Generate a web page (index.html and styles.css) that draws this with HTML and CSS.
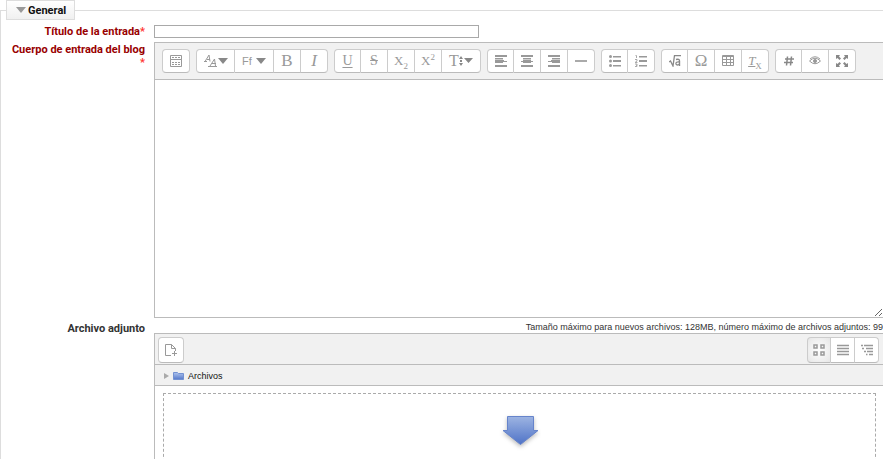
FILE: index.html
```
<!DOCTYPE html>
<html lang="es">
<head>
<meta charset="utf-8">
<title>Entrada del blog</title>
<link rel="stylesheet" href="styles.css">
</head>
<body>
<form>
<fieldset class="section">
  <legend class="section-title"><svg width="10" height="6" viewBox="0 0 10 6"><path d="M0 0h10L5 6z" fill="#999"/></svg>General</legend>

  <div class="row row-title">
    <label class="label required" for="titulo">Título de la entrada<span class="star">*</span></label>
    <input class="title-input" id="titulo" type="text">
  </div>

  <div class="row row-body">
    <label class="label required" for="cuerpo">Cuerpo de entrada del blog <span class="star star-below">*</span></label>
    <div class="editor">
      <div class="toolbar">
        <div class="group">
          <button type="button" aria-label="Mostrar más botones"><svg width="14" height="14" viewBox="0 0 14 14" fill="none" stroke="#999"><path d="M1.500 1.500h11v4h-11zM1.500 5.500h11v7h-11z"/><path d="M3 3.500h9M3 8.500h9M3 10.500h9" stroke-dasharray="2 1"/></svg></button>
        </div>
        <div class="group">
          <button type="button" class="wide" aria-label="Estilos"><svg width="24" height="14" viewBox="0 0 24 14"><g fill="none" stroke="#999"><path d="M1 7.500L5 1l1 6.500M3 5.500h3M0 7.500h3M6 12l4.500-7 1 7M8 9.500h4M4 12.500h9"/></g><path d="M14 4h10l-5 6z" fill="#888"/></svg></button>
          <button type="button" class="wide font" aria-label="Tipo de letra"><span>Ff</span><svg width="10" height="6" viewBox="0 0 10 6"><path d="M0 0h10L5 6z" fill="#888"/></svg></button>
          <button type="button" class="serif">B</button>
          <button type="button" class="serif italic">I</button>
        </div>
        <div class="group">
          <button type="button" class="letter under">U</button>
          <button type="button" class="letter strike">S</button>
          <button type="button" class="letter script"><span>X<sub>2</sub></span></button>
          <button type="button" class="letter script"><span>X<sup>2</sup></span></button>
          <button type="button" class="wide letter size"><span>T</span><svg width="14" height="12" viewBox="0 0 14 12"><path d="M0 4l2-3 2 3zM0 8l2 3 2-3zM1 5h2v2H1zM5 3h9l-4.500 5z" fill="#888"/></svg></button>
        </div>
        <div class="group">
          <button type="button" aria-label="Alinear a la izquierda"><svg width="12" height="12" viewBox="0 0 12 12"><path d="M0 0h12v2H0zM0 3h8v1.500H0zM0 5h9v1H0zM0 6h12v1H0zM0 7h8v1H0zM0 10h12v2H0z" fill="#999"/></svg></button>
          <button type="button" aria-label="Centrar"><svg width="12" height="12" viewBox="0 0 12 12"><path d="M0 0h12v2H0zM2 3h8v1.500H2zM2 5h8v1H2zM0 6h12v1H0zM2 7h8v1H2zM0 10h12v2H0z" fill="#999"/></svg></button>
          <button type="button" aria-label="Alinear a la derecha"><svg width="12" height="12" viewBox="0 0 12 12"><path d="M0 0h12v2H0zM4 3h8v1.500H4zM3 5h9v1H3zM0 6h12v1H0zM4 7h8v1H4zM0 10h12v2H0z" fill="#999"/></svg></button>
          <button type="button" aria-label="Línea horizontal"><svg width="12" height="12" viewBox="0 0 12 12"><path d="M0 5h12v2H0z" fill="#aaa"/></svg></button>
        </div>
        <div class="group">
          <button type="button" aria-label="Lista"><svg width="12" height="12" viewBox="0 0 12 12" fill="#999"><circle cx="1.500" cy="1.500" r="1.500"/><circle cx="1.500" cy="6" r="1.500"/><circle cx="1.500" cy="10.500" r="1.500"/><path d="M4 1h8v1.500H4zM4 5h8v2H4zM4 10h8v1.500H4z"/></svg></button>
          <button type="button" aria-label="Lista numerada"><svg width="12" height="12" viewBox="0 0 12 12" fill="#999"><path d="M4 1h8v1.500H4zM4 5h8v2H4zM4 10h8v1.500H4z"/><path d="M0.500 0.500h1v2.500M0 4.500h2v1.500l-2 1.500h2.500M0 9h2v1.300H1h1v1.200H0" fill="none" stroke="#aaa"/></svg></button>
        </div>
        <div class="group">
          <button type="button" aria-label="Ecuación"><svg width="12" height="12" viewBox="0 0 12 12" fill="none" stroke="#888"><path d="M0 7l1.500-1L4 11 5.500 .5H12" stroke-width="1.300"/><path d="M7 4.500q3.500-1 3.500 1.500v5M10.500 7q-4-.5-3.500 2 1 2 3.500 0" stroke-width="1.400"/></svg></button>
          <button type="button" class="serif">Ω</button>
          <button type="button" aria-label="Tabla"><svg width="12" height="12" viewBox="0 0 12 12" fill="none" stroke="#999"><path d="M.5 .5h11v10H.5zM.5 1.500h11M.5 4.500h11M.5 7.500h11M4.500 1v10M8.500 1v10"/></svg></button>
          <button type="button" class="letter clear"><span><i>T</i><sub>X</sub></span></button>
        </div>
        <div class="group">
          <button type="button" aria-label="Código"><svg width="10" height="10" viewBox="0 0 10 10" fill="none" stroke="#888" stroke-width="1.500"><path d="M3.500 .5L2.500 9.500M7.500 .5l-1 9M1 3h9M0 6.500h9"/></svg></button>
          <button type="button" aria-label="Vista previa"><svg width="12" height="10" viewBox="0 0 12 10" fill="none" stroke="#999"><path d="M.5 5Q6-.5 11.500 5 6 10.500.5 5zM1 3Q6-1.500 11 3"/><circle cx="6" cy="5" r="1.500" fill="#999"/></svg></button>
          <button type="button" aria-label="Pantalla completa"><svg width="12" height="12" viewBox="0 0 12 12" fill="#888"><path d="M0 0h4L3 1.500 5 3.500 3.500 5 1.500 3 0 4zM12 0v4l-1.500-1-2 2L7 3.500l2-2L8 0zM0 12V8l1.500 1 2-2L5 8.500l-2 2L4 12zM12 12H8l1-1.500-2-2L8.500 7l2 2L12 8z"/></svg></button>
        </div>
      </div>
      <textarea class="editor-area" id="cuerpo"></textarea>
    </div>
  </div>

  <div class="row">
    <div class="label">Archivo adjunto</div>
    <div class="attach">
      <p class="limits">Tamaño máximo para nuevos archivos: 128MB, número máximo de archivos adjuntos: 99</p>
      <div class="manager">
        <div class="manager-bar">
          <button type="button" class="add" aria-label="Agregar archivo"><svg width="12" height="14" viewBox="0 0 12 14" fill="none" stroke="#999"><path d="M6 12.500H.5v-11h6l4 4V8M6.500 1.500v4h4M9.500 8v5M7 10.500h5"/></svg></button>
          <div class="views">
            <button type="button" class="active" aria-label="Iconos"><svg width="12" height="12" viewBox="0 0 12 12" fill="none" stroke="#999" stroke-width="1.500"><path d="M1 1h3v3H1zM8 1h3v3H8zM1 8h3v3H1zM8 8h3v3H8z"/></svg></button>
            <button type="button" aria-label="Detalles"><svg width="12" height="12" viewBox="0 0 12 12" stroke="#999" stroke-width="1.300"><path d="M0 1.500h12M0 4.500h12M0 7.500h12M0 10.500h12"/></svg></button>
            <button type="button" aria-label="Árbol"><svg width="12" height="12" viewBox="0 0 12 12" stroke="#999" stroke-width="1.300"><path d="M0 1.500h2M3 1.500h9M1 4.500h2M5 4.500h7M3 7.500h2M6 7.500h6M5 10.500h1.500M8 10.500h4"/></svg></button>
          </div>
        </div>
        <div class="path">
          <svg width="5" height="6" viewBox="0 0 5 6"><path d="M0 0l5 3-5 3z" fill="#aaa"/></svg>
          <svg width="11" height="10" viewBox="0 0 11 10"><defs><linearGradient id="folder" x2="0" y2="1"><stop stop-color="#b0c5ee"/><stop offset="1" stop-color="#5578ca"/></linearGradient></defs><path d="M.5 8.500v-7h4l1 1h5v6z" fill="url(#folder)" stroke="#7492d2"/></svg>
          <a href="#">Archivos</a>
        </div>
        <div class="drop">
          <svg width="42" height="38" viewBox="0 0 42 38"><defs><linearGradient id="arrow" x2="0" y2="1"><stop stop-color="#9db4e2"/><stop offset="1" stop-color="#4f73c7"/></linearGradient></defs><path class="arrow" d="M8.500 2.500h26v14h4.500L21.500 30.500 4 16.500h4.500z" fill="url(#arrow)" stroke="#6684cb"/></svg>
        </div>
      </div>
    </div>
  </div>
</fieldset>
</form>
</body>
</html>
```
FILE: styles.css
```
* { box-sizing: border-box; }

body {
  margin: 0;
  overflow: hidden;
  background: #fff;
  color: #333;
  font: 11px/13px "Liberation Sans", Arial, sans-serif;
}

.section {
  min-width: 0;
  margin: 0;
  padding: 5px 0 0;
  border: 1px solid #ddd;
  border-width: 1px 0 0 1px;
}

.section-title {
  display: flex;
  align-items: center;
  gap: 2px;
  height: 20px;
  margin-left: 5px;
  padding: 0 8px 0 9px;
  border: 1px solid #ddd;
  background: linear-gradient(#fff, #f0f0f0);
  color: #111;
  font-family: Roboto, "Liberation Sans", sans-serif;
  font-weight: bold;
}

.row {
  display: grid;
  grid-template-columns: 144px minmax(0, 1fr);
  column-gap: 9px;
}

.row-title { margin-bottom: 4px; }
.row-body { margin-bottom: 4px; }

.label {
  font-family: Roboto, "Liberation Sans", sans-serif;
  font-weight: bold;
  text-align: right;
}
.required { color: #900; }
.row-body .label { padding-top: 1px; }
.star { color: #f33; }
.star-below { display: block; }

.title-input {
  width: 325px;
  max-width: 100%;
  height: 13px;
  padding: 0 2px;
  border: 1px solid #a9a9a9;
  font: inherit;
}

.editor {
  border: 1px solid #bbb;
  border-right: 0;
}

.toolbar {
  display: flex;
  gap: 6px;
  padding: 6px 7px;
  border-bottom: 1px solid #bbb;
  background: #f1f1f1;
}

.group, .views { display: flex; }

button {
  display: flex;
  align-items: center;
  justify-content: center;
  width: 27px;
  height: 24px;
  padding: 0;
  border: 1px solid #ccc;
  border-left-width: 0;
  border-bottom-color: #bbb;
  background: #fff;
  color: #999;
  line-height: 16px;
}
button:first-child {
  border-left-width: 1px;
  border-radius: 4px 0 0 4px;
}
button:last-child { border-radius: 0 4px 4px 0; }
button:only-child {
  width: 28px;
  border-radius: 4px;
}
.wide, .wide:first-child { width: 39px; }

.font { gap: 4px; font: 11px/16px "Liberation Sans", Arial, sans-serif; }
.serif { font: 17px/20px "Liberation Serif", serif; }
.italic { font-style: italic; }
.letter { font: 14px/16px "Liberation Serif", serif; }
.under { text-decoration: underline; text-underline-offset: 2px; }
.strike { text-decoration: line-through; }
.script, .clear { font-size: 13px; }
sub, sup { font-size: 9px; line-height: 0; }
.clear i { text-decoration: underline; }
.size { font-size: 16px; }

.editor-area {
  display: block;
  width: 100%;
  height: 237px;
  padding: 4px;
  border: 0;
  outline: 0;
  background: #fff;
  resize: vertical;
}

.limits {
  height: 11px;
  margin: 0;
  font-size: 9px;
  line-height: 11px;
  text-align: right;
  white-space: nowrap;
}

.manager {
  border: 1px solid #bbb;
  border-right: 0;
}

.manager-bar {
  display: flex;
  justify-content: space-between;
  padding: 3px 4px 1px 3px;
  border-bottom: 1px solid #bbb;
  background: #f1f1f1;
}
.manager-bar button { width: 24px; height: 26px; }
.manager-bar .add { width: 26px; border-radius: 4px; }
.manager-bar .active { background: radial-gradient(#fff, #e6e6e6); }

.path {
  display: flex;
  align-items: center;
  gap: 4px;
  height: 21px;
  padding: 2px 9px 0;
  border-bottom: 1px solid #bbb;
  background: #f1f1f1;
  font-size: 9px;
}
.path a { color: #111; text-decoration: none; }

.drop {
  display: flex;
  justify-content: center;
  height: 140px;
  margin: 7px 7px 7px 8px;
  padding-top: 20px;
  border: 1px dashed #aaa;
}
.arrow { filter: drop-shadow(0 2px 2px #bbb); }
```
